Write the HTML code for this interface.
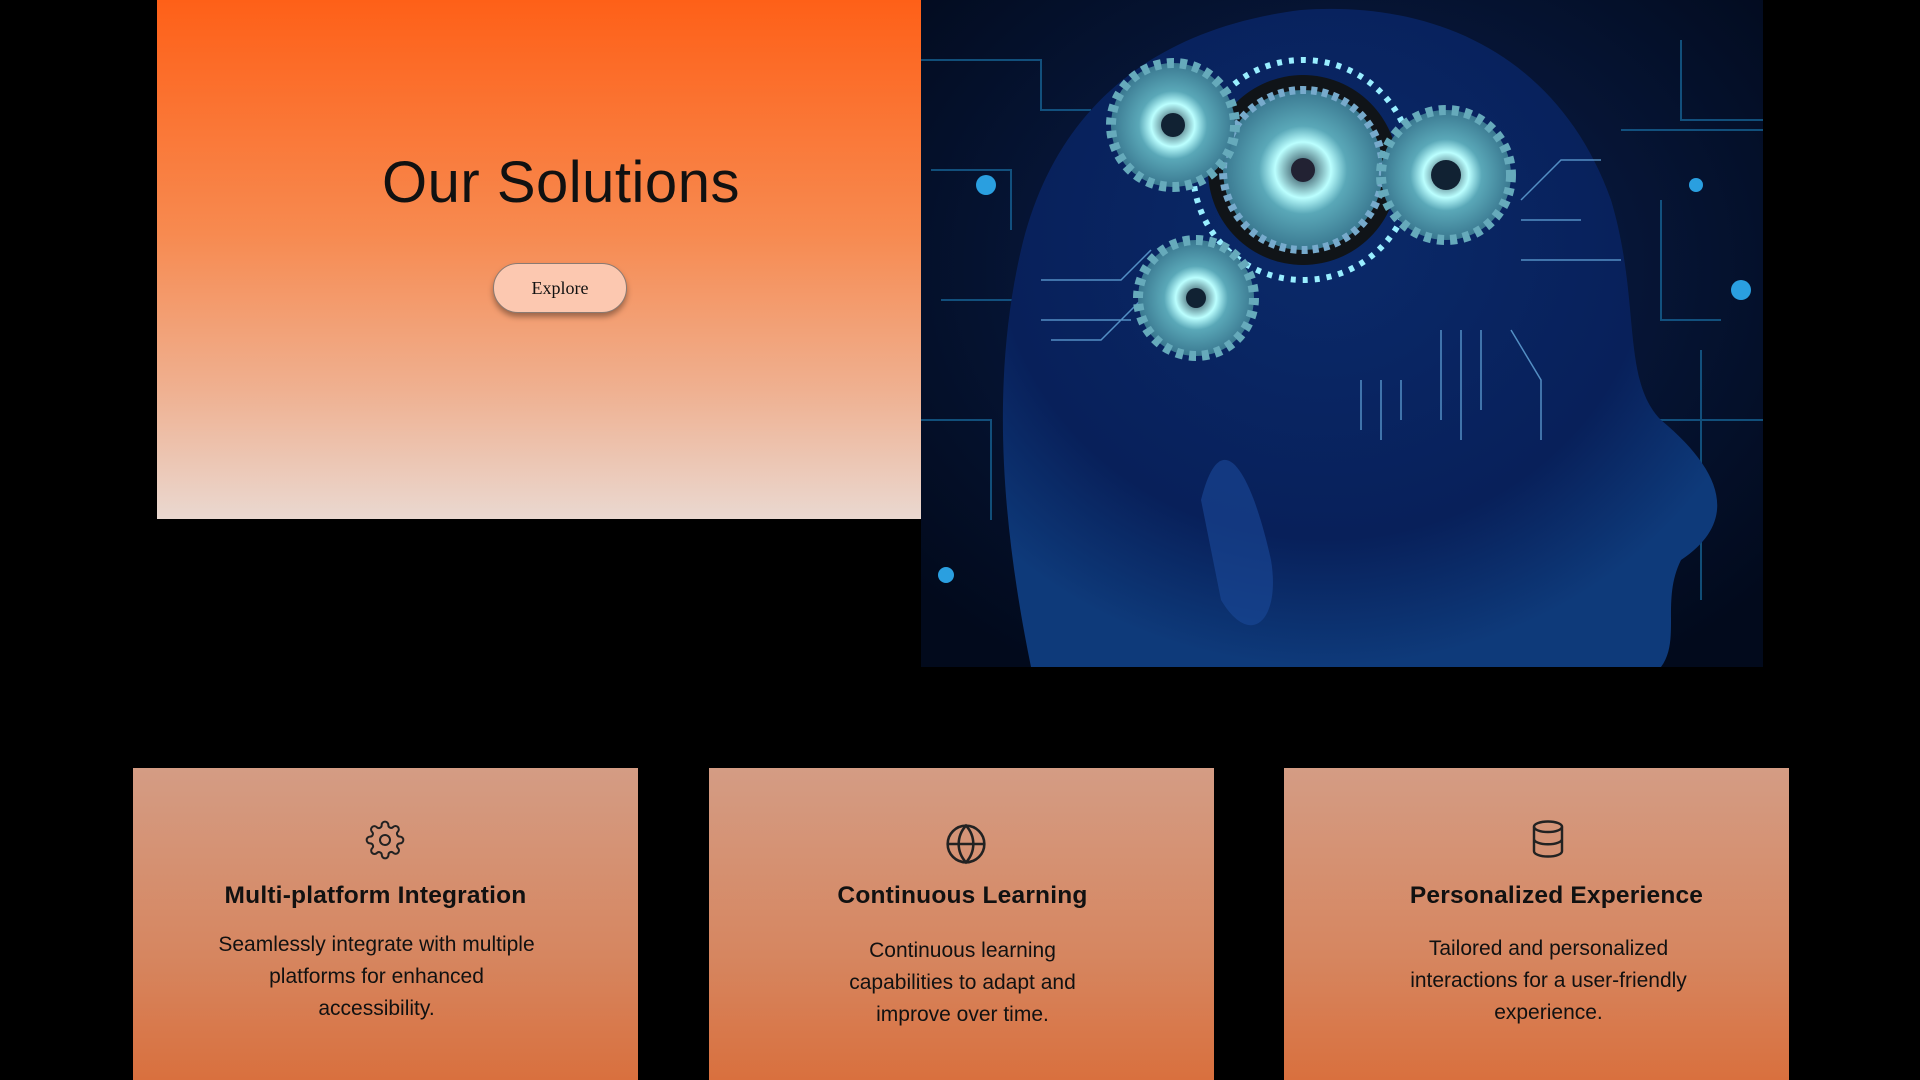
<!DOCTYPE html>
<html><head><meta charset="utf-8"><style>
html,body{margin:0;padding:0;background:#000;width:1920px;height:1080px;overflow:hidden;font-family:"Liberation Sans",sans-serif;}
.hero{position:absolute;left:157px;top:0;width:764px;height:519px;background:linear-gradient(180deg,#fe6018 0%,#f78a50 45%,#efb090 75%,#ead8d0 100%);}
.hero h1{position:absolute;left:22px;width:100%;top:148px;margin:0;text-align:center;font-weight:400;font-size:58px;color:#111;line-height:70px;letter-spacing:0.5px}
.btn{position:absolute;left:493px;top:263px;width:132px;height:48px;border:1px solid #8a7a72;border-radius:25px;background:#fcc8b0;box-shadow:0 4px 6px rgba(0,0,0,.35);font-family:"Liberation Serif",serif;font-size:18px;text-align:center;line-height:48px;color:#111}
.img{position:absolute;left:921px;top:0;width:842px;height:667px}
.card{position:absolute;top:768px;width:505px;height:312px;background:linear-gradient(180deg,#d49c84 0%,#d68660 60%,#d9703e 100%);text-align:center;color:#111}
.card h3{position:absolute;margin:0;width:100%;font-size:24.5px;font-weight:700;letter-spacing:0.2px}
.card p{margin:0;position:absolute;width:100%;font-size:21px;line-height:32px}
.card svg{position:absolute}
</style></head><body>
<div class="hero"><h1>Our Solutions</h1></div>
<div class="btn" style="left:493px">Explore</div>
<svg class="img" viewBox="0 0 842 667" xmlns="http://www.w3.org/2000/svg">
<defs>
<radialGradient id="bg" cx="50%" cy="40%" r="70%"><stop offset="0" stop-color="#0a2050"/><stop offset="1" stop-color="#020a1c"/></radialGradient>
<radialGradient id="hd" cx="45%" cy="35%" r="65%"><stop offset="0" stop-color="#0a2a6a"/><stop offset=".7" stop-color="#08205a"/><stop offset="1" stop-color="#0e3a7a"/></radialGradient>
<radialGradient id="gr" cx="50%" cy="50%" r="50%"><stop offset="0" stop-color="#1a3040"/><stop offset=".35" stop-color="#bff"/><stop offset=".55" stop-color="#5aa8b8"/><stop offset="1" stop-color="#3a7890"/></radialGradient>
</defs>
<rect width="842" height="667" fill="url(#bg)"/>
<g stroke="#1a7ab0" stroke-width="2" fill="none" opacity=".6">
<path d="M0 60H120V110H170M10 170H90V230M20 300H100V360M0 420H70V520M760 40V120H842M700 130H842M740 200V320H800M780 350V600M720 420H842"/>
</g>
<g fill="#2a9fe0"><circle cx="65" cy="185" r="10"/><circle cx="820" cy="290" r="10"/><circle cx="775" cy="185" r="7"/><circle cx="25" cy="575" r="8"/></g>
<path d="M110 667 C80 520 70 380 100 250 C130 120 220 30 380 10 C520 0 640 60 690 200 C720 300 700 380 740 420 C800 470 820 520 760 560 C740 600 760 640 740 667Z" fill="url(#hd)"/>
<path d="M280 500 C300 420 330 470 350 560 C360 620 330 650 300 600Z" fill="#1a4a9a" opacity=".6"/>
<g stroke="#6ad" stroke-width="1.5" fill="none" opacity=".8">
<path d="M120 280H200L230 250M120 320H210M130 340H180L220 300M440 380V430M460 380V440M480 380V420M520 330V420M540 330V440M560 330V410M590 330L620 380V440M600 220H660M600 260H700M600 200L640 160H680"/>
</g>
<g stroke="#9ef" stroke-width="6" stroke-dasharray="5 7" fill="none"><circle cx="382" cy="170" r="110"/></g>
<circle cx="382" cy="170" r="95" fill="#101418"/>
<circle cx="382" cy="170" r="80" fill="url(#gr)" stroke="#7ac" stroke-width="8" stroke-dasharray="6 5"/>
<circle cx="252" cy="125" r="62" fill="url(#gr)" stroke="#6ab" stroke-width="10" stroke-dasharray="7 6"/>
<circle cx="525" cy="175" r="65" fill="url(#gr)" stroke="#6ab" stroke-width="10" stroke-dasharray="7 6"/>
<circle cx="275" cy="298" r="58" fill="url(#gr)" stroke="#6ab" stroke-width="10" stroke-dasharray="7 6"/>
<circle cx="382" cy="170" r="12" fill="#223"/><circle cx="252" cy="125" r="12" fill="#123"/><circle cx="525" cy="175" r="15" fill="#123"/><circle cx="275" cy="298" r="10" fill="#123"/>
</svg>

<div class="card" style="left:133px">
<svg style="left:232px;top:47px" width="40" height="50" viewBox="0 0 24 24" fill="none" stroke="#222" stroke-width="1.2"><circle cx="12" cy="12" r="3"/><path d="M19.4 15a1.65 1.65 0 0 0 .33 1.82l.06.06a2 2 0 1 1-2.830 2.83l-.06-.06a1.65 1.65 0 0 0-1.820-.33 1.65 1.65 0 0 0-1 1.51V21a2 2 0 1 1-4 0v-.09A1.65 1.65 0 0 0 9 19.4a1.65 1.65 0 0 0-1.82.33l-.06.06a2 2 0 1 1-2.83-2.83l.06-.06A1.65 1.65 0 0 0 4.68 15a1.65 1.65 0 0 0-1.51-1H3a2 2 0 1 1 0-4h.09A1.65 1.65 0 0 0 4.6 9a1.65 1.65 0 0 0-.33-1.82l-.06-.06a2 2 0 1 1 2.83-2.83l.06.06A1.65 1.65 0 0 0 9 4.68a1.65 1.65 0 0 0 1-1.51V3a2 2 0 1 1 4 0v.09a1.65 1.65 0 0 0 1 1.51 1.65 1.65 0 0 0 1.82-.33l.06-.06a2 2 0 1 1 2.83 2.83l-.06.06A1.65 1.65 0 0 0 19.4 9a1.65 1.65 0 0 0 1.51 1H21a2 2 0 1 1 0 4h-.09a1.65 1.65 0 0 0-1.51 1z"/></svg>
<h3 style="top:114px;left:-10px">Multi-platform Integration</h3>
<p style="top:161px;left:-9px">Seamlessly integrate with multiple<br>platforms for enhanced<br>accessibility.</p>
</div>
<div class="card" style="left:709px">
<svg style="left:235px;top:50px" width="44" height="52" viewBox="0 0 24 24" fill="none" stroke="#222" stroke-width="1.4"><circle cx="12" cy="12" r="10"/><path d="M2 12h20M12 2a15 15 0 0 1 4 10 15 15 0 0 1-4 10 15 15 0 0 1-4-10 15 15 0 0 1 4-10z"/></svg>
<h3 style="top:114px;left:1px">Continuous Learning</h3>
<p style="top:167px;left:1px">Continuous learning<br>capabilities to adapt and<br>improve over time.</p>
</div>
<div class="card" style="left:1284px">
<svg style="left:243px;top:48px" width="42" height="46" viewBox="0 0 24 24" fill="none" stroke="#222" stroke-width="1.4"><ellipse cx="12" cy="5" rx="8" ry="3"/><path d="M4 5v14c0 1.7 3.6 3 8 3s8-1.3 8-3V5M4 12c0 1.7 3.6 3 8 3s8-1.3 8-3"/></svg>
<h3 style="top:114px;left:20px">Personalized Experience</h3>
<p style="top:165px;left:12px">Tailored and personalized<br>interactions for a user-friendly<br>experience.</p>
</div>
</body></html>
